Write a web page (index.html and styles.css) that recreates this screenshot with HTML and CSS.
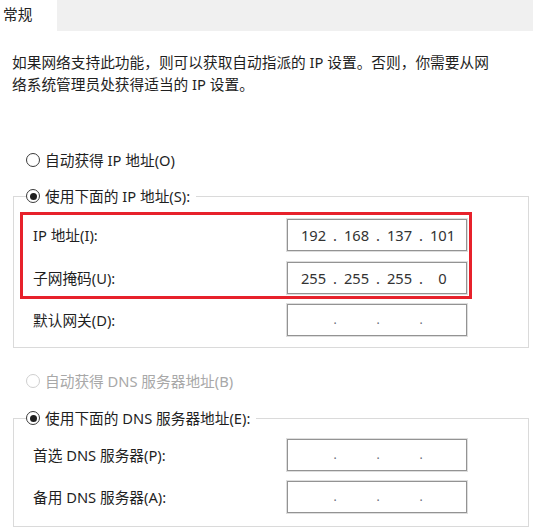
FILE: index.html
```html
<!DOCTYPE html>
<html lang="zh-CN">
<head>
<meta charset="utf-8">
<title>Internet 协议版本 4 (TCP/IPv4) 属性</title>
<link rel="stylesheet" href="styles.css">
</head>
<body>
<div class="tabbar">
  <div class="tab">常规</div>
  <div class="tab-rest"></div>
</div>

<p class="intro">如果网络支持此功能，则可以获取自动指派的 IP 设置。否则，你需要从网络系统管理员处获得适当的 IP 设置。</p>

<div class="option">
  <span class="radio"></span><span>自动获得 IP 地址(O)</span>
</div>

<fieldset class="group group-ip">
  <legend class="option legend">
    <span class="radio checked"></span><span>使用下面的 IP 地址(S):</span>
  </legend>
  <div class="highlight">
    <div class="row">
      <span class="label">IP 地址(I):</span>
      <div class="ip"><span class="oct">192</span><span class="dot">.</span><span class="oct">168</span><span class="dot">.</span><span class="oct">137</span><span class="dot">.</span><span class="oct">101</span></div>
    </div>
    <div class="row">
      <span class="label">子网掩码(U):</span>
      <div class="ip"><span class="oct">255</span><span class="dot">.</span><span class="oct">255</span><span class="dot">.</span><span class="oct">255</span><span class="dot">.</span><span class="oct">0</span></div>
    </div>
  </div>
  <div class="row plain">
    <span class="label">默认网关(D):</span>
    <div class="ip empty"><span class="oct"></span><span class="dot">.</span><span class="oct"></span><span class="dot">.</span><span class="oct"></span><span class="dot">.</span><span class="oct"></span></div>
  </div>
</fieldset>

<div class="option disabled gap-dns">
  <span class="radio"></span><span>自动获得 DNS 服务器地址(B)</span>
</div>

<fieldset class="group group-dns">
  <legend class="option legend">
    <span class="radio checked"></span><span>使用下面的 DNS 服务器地址(E):</span>
  </legend>
  <div class="row plain">
    <span class="label">首选 DNS 服务器(P):</span>
    <div class="ip empty"><span class="oct"></span><span class="dot">.</span><span class="oct"></span><span class="dot">.</span><span class="oct"></span><span class="dot">.</span><span class="oct"></span></div>
  </div>
  <div class="row plain row-second">
    <span class="label">备用 DNS 服务器(A):</span>
    <div class="ip empty"><span class="oct"></span><span class="dot">.</span><span class="oct"></span><span class="dot">.</span><span class="oct"></span><span class="dot">.</span><span class="oct"></span></div>
  </div>
</fieldset>
</body>
</html>
```

FILE: styles.css
```css
html, body {
  margin: 0;
  padding: 0;
  background: #ffffff;
}

body {
  width: 533px;
  font-family: "Noto Sans", "Noto Sans CJK SC", sans-serif;
  font-size: 14.7px;
  line-height: 22px;
  color: #1f1f1f;
}

.tabbar {
  display: flex;
  height: 31px;
  background: #f0f0f0;
}

.tab {
  width: 57px;
  box-sizing: border-box;
  padding-left: 3px;
  line-height: 28px;
  background: #ffffff;
  color: #222;
}

.tab-rest {
  flex: 1;
}

.intro {
  margin: 20px 30px 0 12px;
}

.option {
  display: flex;
  align-items: center;
  gap: 5px;
  height: 22px;
  margin: 54px 0 0 26px;
  white-space: nowrap;
}

.radio {
  width: 14px;
  height: 14px;
  box-sizing: border-box;
  border: 1px solid #3a3a3a;
  border-radius: 50%;
  display: flex;
  align-items: center;
  justify-content: center;
  flex: none;
  background: #fff;
}

.radio.checked::after {
  content: "";
  width: 7px;
  height: 7px;
  border-radius: 50%;
  background: #1e1e1e;
}

.disabled {
  color: #a8a8a8;
}

.disabled .radio {
  border-color: #cfcfcf;
}

.group {
  margin: 14px 0 0 13px;
  width: 516px;
  box-sizing: border-box;
  border: 1px solid #dadada;
  padding: 5px 56px 11px 6px;
  min-width: 0;
}

.option.legend {
  margin: 0 0 0 6px;
  padding: 0 6px 0 0;
  height: 22px;
}

.highlight {
  border: 3px solid #e7212b;
  padding: 4px 2px 2px 10px;
  display: flex;
  flex-direction: column;
  gap: 11px;
}

.row {
  display: grid;
  grid-template-columns: 1fr 180px;
  align-items: center;
}

.row.plain {
  margin-top: 5px;
  padding: 0 5px 0 13px;
}

.group-dns {
  margin-top: 15px;
  padding-top: 10px;
  padding-bottom: 13px;
}

.group-dns .row.plain {
  margin-top: 0;
}

.group-dns .row.plain.row-second {
  margin-top: 10px;
}

.option.gap-dns {
  margin-top: 22px;
}

.label {
  white-space: nowrap;
}

.ip {
  height: 32px;
  box-sizing: border-box;
  border: 1px solid #939393;
  box-shadow: 0 0 0 1px #dedede;
  padding: 0 2px 0 4px;
  display: flex;
  align-items: center;
  background: #fff;
  color: #333;
}

.oct {
  flex: 1;
  text-align: center;
}

.dot {
  width: 0;
  display: flex;
  justify-content: center;
}

.ip.empty .dot {
  color: #6a6a78;
  font-size: 12px;
}
```
